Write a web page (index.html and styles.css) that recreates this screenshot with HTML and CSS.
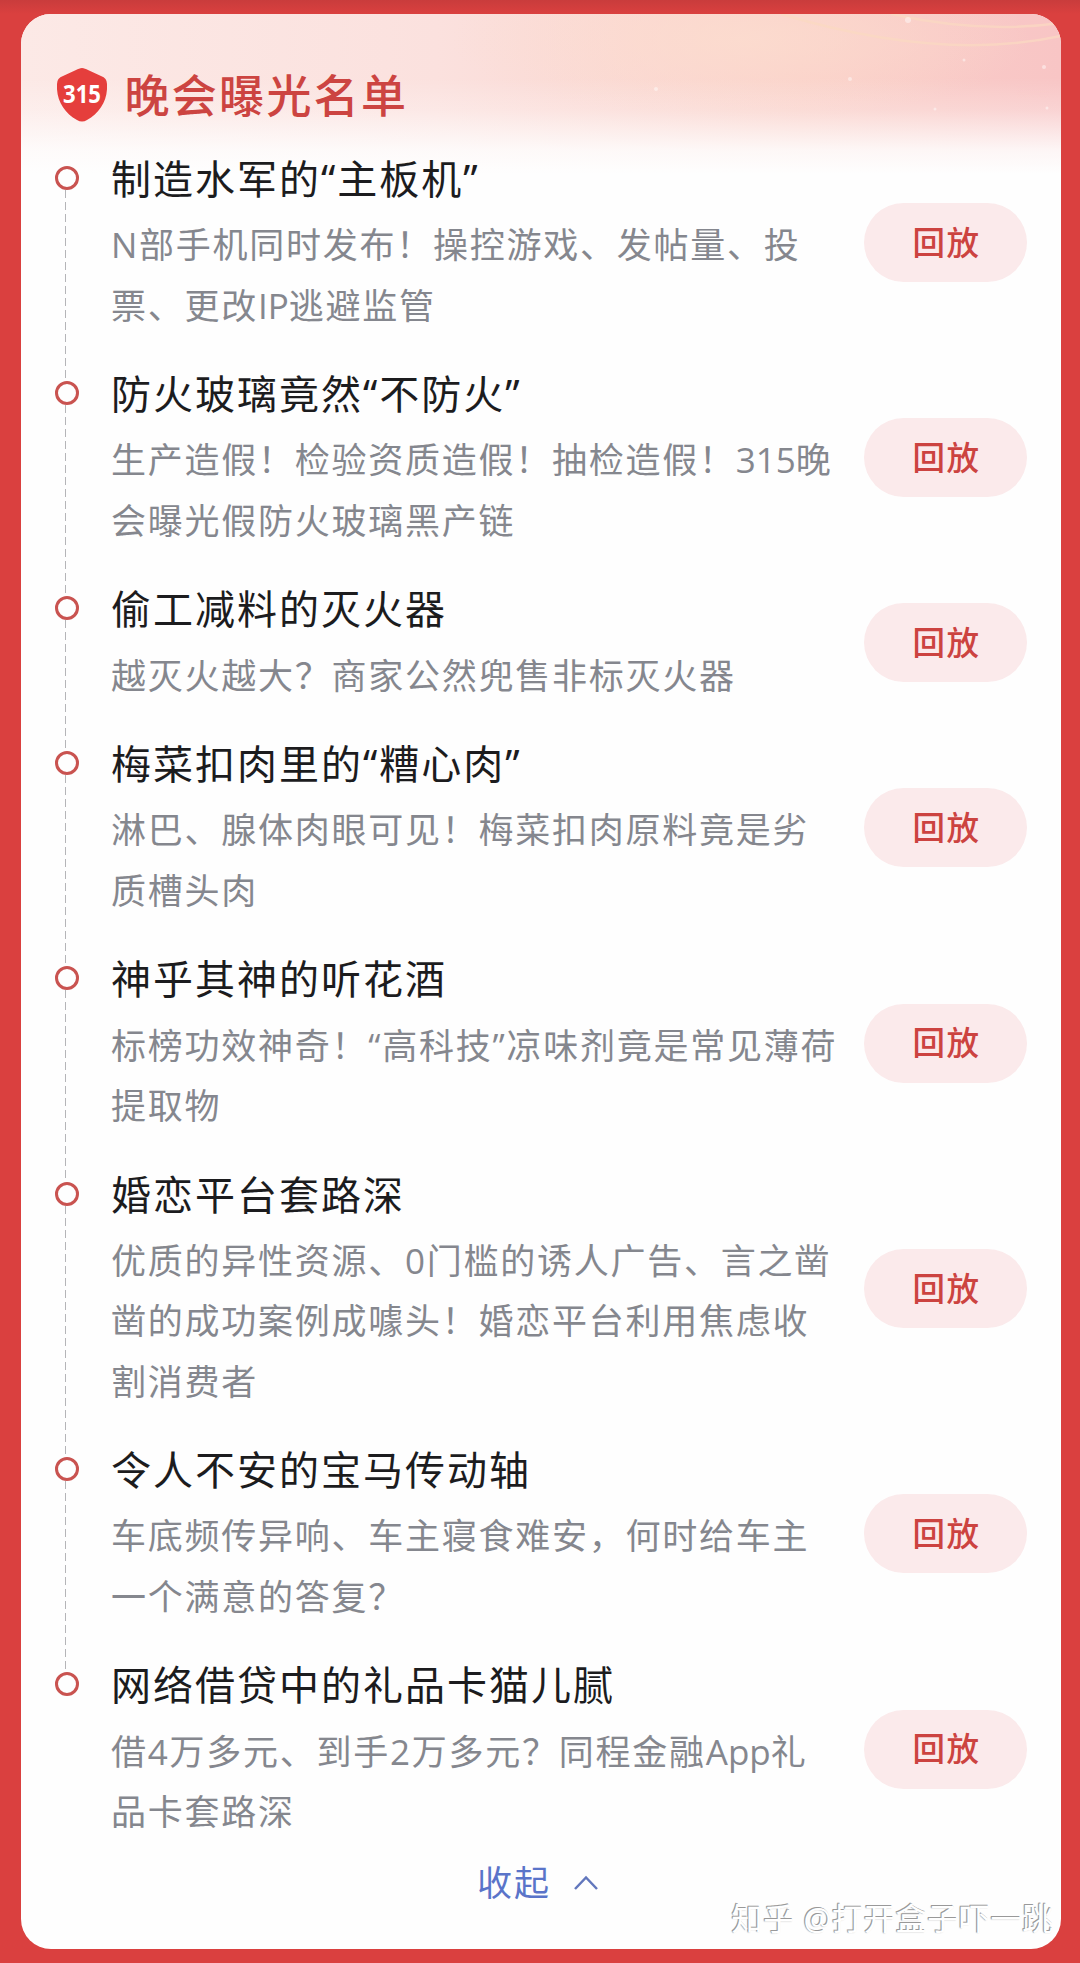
FILE: index.html
```html
<!DOCTYPE html>
<html lang="zh-CN">
<head>
    <meta charset="UTF-8">
    <meta name="viewport" content="width=device-width, initial-scale=1.0">
    <title>315晚会曝光名单</title>
    <link rel="stylesheet" href="styles.css">
</head>
<body>
    <div class="card">
        <svg class="glow" viewBox="0 0 1040 160" preserveAspectRatio="none">
            <defs>
                <linearGradient id="base" x1="0" x2="1" y1="0" y2="0">
                    <stop offset="0" stop-color="#fce9e6"/>
                    <stop offset=".4" stop-color="#fbe1de"/>
                    <stop offset=".75" stop-color="#fad0c9"/>
                    <stop offset="1" stop-color="#f8c5c5"/>
                </linearGradient>
                <radialGradient id="warm">
                    <stop offset="0" stop-color="#fcddcf" stop-opacity=".8"/>
                    <stop offset="1" stop-color="#fcddcf" stop-opacity="0"/>
                </radialGradient>
                <linearGradient id="fade" x1="0" x2="0" y1="0" y2="1">
                    <stop offset=".4" stop-color="#fefefe" stop-opacity="0"/>
                    <stop offset=".6" stop-color="#fefefe" stop-opacity=".25"/>
                    <stop offset=".85" stop-color="#fefefe" stop-opacity=".85"/>
                    <stop offset="1" stop-color="#fefefe"/>
                </linearGradient>
            </defs>
            <rect width="1040" height="160" fill="url(#base)"/>
            <ellipse cx="720" cy="25" rx="290" ry="80" fill="url(#warm)"/>
            <g fill="none" stroke="#fbdac2" stroke-width="2.5" opacity=".7">
                <path d="M760 0 Q920 48 1040 22"/>
                <path d="M870 0 Q960 20 1040 9"/>
            </g>
            <rect width="1040" height="160" fill="url(#fade)"/>
            <g fill="#fff" opacity=".45">
                <circle cx="887" cy="6" r="3"/>
                <circle cx="635" cy="75" r="2"/>
                <circle cx="829" cy="65" r="2"/>
                <circle cx="943" cy="46" r="1.5"/>
                <circle cx="1023" cy="53" r="2"/>
                <circle cx="914" cy="95" r="1.5"/>
                <circle cx="1026" cy="94" r="1.5"/>
            </g>
        </svg>

        <div class="header">
            <svg class="shield" viewBox="0 0 50 54">
                <path d="M25 0 C27 0 29 1 31 2 L44 8 Q50 10 50 16 C51 32 43 45 30 52 Q25 55 20 52 C7 45 -1 32 0 16 Q0 10 6 8 L19 2 C21 1 23 0 25 0Z" fill="#e53e3c"/>
                <text x="25" y="34.5" text-anchor="middle" textLength="38" lengthAdjust="spacingAndGlyphs">315</text>
            </svg>
            <h1>晚会曝光名单</h1>
        </div>

        <ul class="list">
            <li class="item">
                <div class="info">
                    <h2>制造水军的“主板机”</h2>
                    <p>N部手机同时发布！操控游戏、发帖量、投<br>票、更改<span class="en">IP</span>逃避监管</p>
                </div>
                <button>回放</button>
            </li>
            <li class="item">
                <div class="info">
                    <h2>防火玻璃竟然“不防火”</h2>
                    <p>生产造假！检验资质造假！抽检造假！<span class="en">315</span>晚<br>会曝光假防火玻璃黑产链</p>
                </div>
                <button>回放</button>
            </li>
            <li class="item">
                <div class="info">
                    <h2>偷工减料的灭火器</h2>
                    <p>越灭火越大？商家公然兜售非标灭火器</p>
                </div>
                <button>回放</button>
            </li>
            <li class="item">
                <div class="info">
                    <h2>梅菜扣肉里的“糟心肉”</h2>
                    <p>淋巴、腺体肉眼可见！梅菜扣肉原料竟是劣<br>质槽头肉</p>
                </div>
                <button>回放</button>
            </li>
            <li class="item">
                <div class="info">
                    <h2>神乎其神的听花酒</h2>
                    <p>标榜功效神奇！“高科技”凉味剂竟是常见薄荷<br>提取物</p>
                </div>
                <button>回放</button>
            </li>
            <li class="item">
                <div class="info">
                    <h2>婚恋平台套路深</h2>
                    <p>优质的异性资源、0门槛的诱人广告、言之凿<br>凿的成功案例成噱头！婚恋平台利用焦虑收<br>割消费者</p>
                </div>
                <button>回放</button>
            </li>
            <li class="item">
                <div class="info">
                    <h2>令人不安的宝马传动轴</h2>
                    <p>车底频传异响、车主寝食难安，何时给车主<br>一个满意的答复？</p>
                </div>
                <button>回放</button>
            </li>
            <li class="item">
                <div class="info">
                    <h2>网络借贷中的礼品卡猫儿腻</h2>
                    <p>借4万多元、到手2万多元？同程金融<span class="en">App</span>礼<br>品卡套路深</p>
                </div>
                <button>回放</button>
            </li>
        </ul>

        <div class="fold">
            <span>收起</span>
            <svg viewBox="0 0 26 16"><path d="M2 14 L13 2.5 L24 14"/></svg>
        </div>
        <div class="watermark">知乎 @打开盒子吓一跳</div>
    </div>
</body>
</html>
```
FILE: styles.css
```css
*, *::before, *::after {
    box-sizing: border-box;
}
body {
    margin: 0;
    height: 1963px;
    padding: 14px 19px 14px 21px;
    background: linear-gradient(#c93c3c, #da403f 14px, #da403f);
    font-family: "Open Sans", "Noto Sans CJK SC", sans-serif;
    overflow: hidden;
}
h1, h2, p, ul {
    margin: 0;
    padding: 0;
    font-weight: 400;
}
.card {
    position: relative;
    height: 1935px;
    padding: 54px 34px 0;
    border-radius: 30px;
    background: #fefefe;
    overflow: hidden;
}
.glow {
    position: absolute;
    top: 0;
    left: 0;
    width: 100%;
    height: 160px;
}
.header {
    position: relative;
    display: flex;
    align-items: center;
    height: 54px;
    margin-left: 2px;
}
.shield {
    width: 50px;
    height: 54px;
    margin-right: 17.5px;
}
.shield text {
    font: bold 25px "Open Sans", sans-serif;
    fill: #fff;
}
h1 {
    font-size: 45px;
    font-weight: 500;
    line-height: 53px;
    letter-spacing: 2.3px;
    color: #cc4441;
}
.list {
    position: relative;
    margin-top: 30px;
    list-style: none;
}
.item {
    position: relative;
    display: flex;
    align-items: center;
    padding-left: 56px;
    margin-bottom: 33.8px;
    white-space: nowrap;
}
/* timeline dot and the dashed line down to the next one */
.item::before {
    content: "";
    position: absolute;
    left: 0;
    top: 14px;
    width: 24px;
    height: 24px;
    border: 3.5px solid #c95350;
    border-radius: 50%;
}
.item:not(:last-child)::after {
    content: "";
    position: absolute;
    left: 10px;
    top: 38px;
    bottom: -47px;
    width: 1px;
    background: repeating-linear-gradient(#b5b5b8 0 8px, transparent 8px 12px);
}
h2 {
    height: 52.6px;
    margin-bottom: 8px;
    font-family: "Noto Sans", "Noto Sans CJK SC", sans-serif;
    font-size: 40px;
    line-height: 53.6px;
    letter-spacing: 2px;
    color: #1c1c1e;
}
p {
    position: relative;
    top: 2.5px;
    font-size: 35px;
    line-height: 60.4px;
    letter-spacing: 1.75px;
    color: #85878e;
}
.en {
    letter-spacing: 0;
}
button {
    width: 163px;
    height: 79px;
    margin-left: auto;
    padding: 0 0 5px 2px;
    border: 0;
    border-radius: 40px;
    background: #fbeaeb;
    font: 500 32.5px "Noto Sans CJK SC", sans-serif;
    letter-spacing: 1.5px;
    color: #cc4340;
}
.info {
    width: 0;
}
.fold {
    display: flex;
    align-items: center;
    margin: -15.5px 0 0 422px;
    font-size: 35px;
    line-height: 50px;
    letter-spacing: 2px;
    color: #5a74c9;
}
.fold svg {
    width: 26px;
    height: 16px;
    margin-left: 22px;
    fill: none;
    stroke: #6277bd;
    stroke-width: 2.5;
}
.watermark {
    position: absolute;
    right: 7px;
    bottom: 8px;
    font-size: 31px;
    line-height: 46px;
    letter-spacing: .7px;
    white-space: nowrap;
    color: #fff;
    text-shadow: -1px -1px 0 #999, -1px 0 1px #aaa;
}
```
